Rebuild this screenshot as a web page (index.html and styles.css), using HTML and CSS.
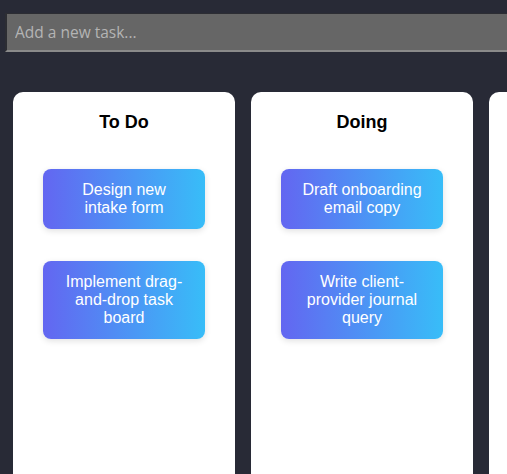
FILE: index.html
```html
<!DOCTYPE html>
<html lang="en">
<head>
<meta charset="utf-8">
<title>Task Board</title>
<link rel="stylesheet" href="styles.css">
</head>
<body>
<div class="app">
  <input class="new-task" type="text" placeholder="Add a new task...">
  <div class="board">
    <section class="column">
      <h3 class="column-title">To Do</h3>
      <div class="tasks">
        <div class="task">Design new intake form</div>
        <div class="task">Implement drag-and-drop task board</div>
      </div>
    </section>
    <section class="column">
      <h3 class="column-title">Doing</h3>
      <div class="tasks">
        <div class="task">Draft onboarding email copy</div>
        <div class="task">Write client-provider journal query</div>
      </div>
    </section>
    <section class="column column-peek"></section>
  </div>
</div>
</body>
</html>
```

FILE: styles.css
```css
html, body {
  margin: 0;
  height: 100%;
  overflow: hidden;
  background: #282a36;
}

body {
  font-family: "Liberation Sans", Arial, sans-serif;
}

.app {
  padding: 13px 0 0 5px;
}

.new-task {
  display: block;
  box-sizing: border-box;
  width: calc(100% + 40px);
  height: 39px;
  margin: 0;
  padding: 0 8px;
  background: #666666;
  border-style: solid;
  border-width: 1px 1px 2px 2px;
  border-color: #2c2d33 #8a8a8a #8a8a8a #2c2d33;
  color: #eee;
  font-family: "Open Sans", "Noto Sans", sans-serif;
  font-size: 15.5px;
  outline: none;
}

.new-task::placeholder {
  color: #b4b4b4;
}

.board {
  display: flex;
  gap: 16px;
  margin-top: 40px;
  padding-left: 8px;
}

.column {
  flex: 0 0 222px;
  box-sizing: border-box;
  min-height: 420px;
  padding: 20px 30px;
  background: #ffffff;
  border-radius: 10px;
}

.column-title {
  margin: 0 0 36px;
  text-align: center;
  font-size: 18px;
  font-weight: bold;
  color: #000;
}

.tasks {
  display: flex;
  flex-direction: column;
  gap: 32px;
}

.task {
  padding: 12px 20px;
  background: linear-gradient(90deg, #6366f1, #38bdf8);
  border-radius: 8px;
  box-shadow: 0 2px 6px rgba(0, 0, 0, 0.12);
  color: #ffffff;
  font-size: 16px;
  line-height: 18px;
  text-align: center;
}
```
